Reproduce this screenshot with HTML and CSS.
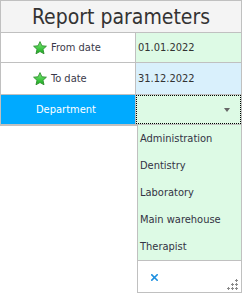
FILE: index.html
```html
<!DOCTYPE html>
<html>
<head>
<meta charset="utf-8">
<link rel="stylesheet" href="styles.css">
</head>
<body>
<div class="panel">
  <div class="header">Report parameters</div>
  <div class="row row-1">
    <div class="label">
      <svg class="star" width="14" height="14" viewBox="0 0 14 14">
        <defs>
          <linearGradient id="g" x1="0" y1="0" x2="0" y2="1">
            <stop offset="0" stop-color="#7ef07a"/>
            <stop offset="1" stop-color="#17a81c"/>
          </linearGradient>
        </defs>
        <polygon points="7,0.6 8.9,4.8 13.4,5.2 10,8.3 11,12.8 7,10.5 3,12.8 4,8.3 0.6,5.2 5.1,4.8" fill="url(#g)" stroke="#2f8f2f" stroke-width="0.9" stroke-linejoin="round"/>
      </svg>
      <span>From date</span>
    </div>
    <div class="value green">01.01.2022</div>
  </div>
  <div class="row row-2">
    <div class="label">
      <svg class="star" width="14" height="14" viewBox="0 0 14 14">
        <polygon points="7,0.6 8.9,4.8 13.4,5.2 10,8.3 11,12.8 7,10.5 3,12.8 4,8.3 0.6,5.2 5.1,4.8" fill="url(#g)" stroke="#2f8f2f" stroke-width="0.9" stroke-linejoin="round"/>
      </svg>
      <span>To date</span>
    </div>
    <div class="value blue">31.12.2022</div>
  </div>
  <div class="row row-3">
    <div class="label selected">Department</div>
    <div class="value green focus">
      <span class="arrow"></span>
    </div>
  </div>
</div>
<div class="dropdown">
  <ul class="items">
    <li>Administration</li>
    <li>Dentistry</li>
    <li>Laboratory</li>
    <li>Main warehouse</li>
    <li>Therapist</li>
  </ul>
  <div class="footer">
    <svg class="clear" width="7" height="7" viewBox="0 0 7 7">
      <path d="M0.8 0.8 L6.2 6.2 M6.2 0.8 L0.8 6.2" stroke="#1c8fe0" stroke-width="1.6" stroke-linecap="square"/>
    </svg>
    <svg class="grip" width="11" height="11" viewBox="0 0 11 11">
      <g fill="#8a8a8a">
        <rect x="9" y="0" width="1" height="3"/><rect x="8" y="1" width="3" height="1"/>
        <rect x="9" y="4" width="1" height="3"/><rect x="8" y="5" width="3" height="1"/>
        <rect x="5" y="4" width="1" height="3"/><rect x="4" y="5" width="3" height="1"/>
        <rect x="9" y="8" width="1" height="3"/><rect x="8" y="9" width="3" height="1"/>
        <rect x="5" y="8" width="1" height="3"/><rect x="4" y="9" width="3" height="1"/>
        <rect x="1" y="8" width="1" height="3"/><rect x="0" y="9" width="3" height="1"/>
      </g>
    </svg>
  </div>
</div>
</body>
</html>
```

FILE: styles.css
```css
html, body {
  margin: 0;
  padding: 0;
  background: #ffffff;
}
body {
  position: relative;
  width: 243px;
  height: 294px;
  overflow: hidden;
  font-family: "DejaVu Sans Condensed", "Liberation Sans", sans-serif;
  font-size: 11px;
  color: #3a3a4a;
}
.panel {
  width: 242px;
  box-sizing: border-box;
  border: 1px solid #c0c0c0;
}
.header {
  height: 31px;
  background: #f4f4f4;
  border-bottom: 1px solid #c0c0c0;
  text-align: center;
  font-size: 21px;
  line-height: 32px;
  color: #333333;
}
.row {
  display: grid;
  grid-template-columns: 134px 105px;
  column-gap: 1px;
  background: #c0c0c0;
  border-bottom: 1px solid #c0c0c0;
}
.row-1 { height: 29px; }
.row-2 { height: 31px; }
.row-3 { height: 29px; }
.label {
  background: #ffffff;
  display: flex;
  align-items: center;
  gap: 4px;
  padding-left: 32px;
}
.label.selected {
  background: #00aaff;
  color: #ffffff;
  padding-left: 35px;
}
.star { flex: none; }
.value {
  display: flex;
  align-items: center;
  padding-left: 2px;
  color: #333333;
  position: relative;
}
.green { background: #ddfae5; }
.blue { background: #d9f0fc; }
.focus {
  outline: 1px dotted #000000;
  outline-offset: -1px;
}
.arrow {
  position: absolute;
  right: 11px;
  top: 13px;
  width: 0;
  height: 0;
  border-left: 3.5px solid transparent;
  border-right: 3.5px solid transparent;
  border-top: 4px solid #666666;
}
.dropdown {
  position: absolute;
  left: 137px;
  top: 124px;
  width: 105px;
  box-sizing: border-box;
  border: 1px solid #c0c0c0;
  background: #ffffff;
}
.items {
  list-style: none;
  margin: 0;
  padding: 0;
  background: #ddfae5;
  border-bottom: 1px solid #c0c0c0;
}
.items li {
  height: 27px;
  line-height: 28px;
  padding-left: 2px;
  color: #333344;
}
.footer {
  height: 31px;
  position: relative;
  display: flex;
  align-items: center;
}
.clear {
  margin-left: 13px;
  margin-top: 1px;
}
.grip {
  position: absolute;
  right: 3px;
  bottom: 2px;
}
```
